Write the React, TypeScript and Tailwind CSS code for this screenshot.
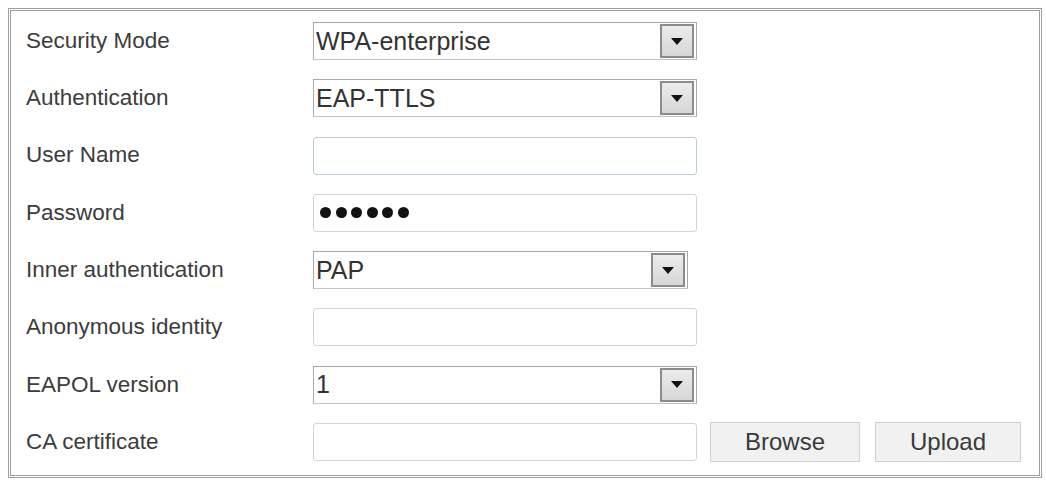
import React from "react";

type Row =
  | { label: string; kind: "select"; value: string; narrow?: boolean }
  | { label: string; kind: "text"; value?: string; focus?: boolean }
  | { label: string; kind: "password"; dots: number }
  | { label: string; kind: "file" };

const rows: Row[] = [
  { label: "Security Mode", kind: "select", value: "WPA-enterprise" },
  { label: "Authentication", kind: "select", value: "EAP-TTLS" },
  { label: "User Name", kind: "text", focus: true },
  { label: "Password", kind: "password", dots: 6 },
  { label: "Inner authentication", kind: "select", value: "PAP", narrow: true },
  { label: "Anonymous identity", kind: "text" },
  { label: "EAPOL version", kind: "select", value: "1" },
  { label: "CA certificate", kind: "file" },
];

function Select({ value, narrow }: { value: string; narrow?: boolean }) {
  return (
    <div
      className={`h-[38px] ${narrow ? "w-[375px]" : "w-[384px]"} flex items-center justify-between border border-[#a9a9a9] border-b-[#c4c4c4] bg-white pl-[2px] pr-[2px]`}
    >
      <span className="text-[25px] leading-none text-[#333]">{value}</span>
      <div className="h-[34px] w-[34px] flex items-center justify-center border-2 border-[#8c8c8c] bg-gradient-to-b from-[#ececec] to-[#d6d6d6]">
        <svg width="12" height="7" viewBox="0 0 12 7">
          <path d="M0 0 L12 0 L6 7 Z" fill="#111" />
        </svg>
      </div>
    </div>
  );
}

function TextBox({ focus, children }: { focus?: boolean; children?: React.ReactNode }) {
  return (
    <div
      className={`h-[38px] w-[384px] flex items-center rounded-[3px] border ${focus ? "border-[#b9cddd]" : "border-[#d4d4d4]"} bg-white px-[5px]`}
    >
      {children}
    </div>
  );
}

function Button({ label, w }: { label: string; w: string }) {
  return (
    <button className={`h-[40px] ${w} border border-[#cfcfcf] bg-[#f1f1f1] text-[24px] leading-none text-[#3a3a3a]`}>
      {label}
    </button>
  );
}

export default function App() {
  return (
    <div className="w-[1046px] h-[481px] bg-white p-[8px] pb-[3px] pr-[4px]" style={{ fontFamily: '"Liberation Sans", Arial, sans-serif' }}>
      <div className="h-full border-[3px] border-double border-[#9f9f9f] pt-[11px] pl-[15px]">
        <div className="flex flex-col gap-[19.3px]">
          {rows.map((r) => (
            <div key={r.label} className="flex items-center h-[38px]">
              <div className="w-[287px] text-[22.5px] leading-none text-[#3c3c3c]">{r.label}</div>
              {r.kind === "select" && <Select value={r.value} narrow={r.narrow} />}
              {r.kind === "text" && <TextBox focus={r.focus} />}
              {r.kind === "password" && (
                <TextBox>
                  <div className="flex gap-[4.5px] pl-[1px]">
                    {Array.from({ length: r.dots }).map((_, i) => (
                      <span key={i} className="block h-[11px] w-[11px] rounded-full bg-[#111]" />
                    ))}
                  </div>
                </TextBox>
              )}
              {r.kind === "file" && (
                <div className="flex items-center gap-[13px]">
                  <TextBox />
                  <div className="flex gap-[15px]">
                    <Button label="Browse" w="w-[150px]" />
                    <Button label="Upload" w="w-[146px]" />
                  </div>
                </div>
              )}
            </div>
          ))}
        </div>
      </div>
    </div>
  );
}
